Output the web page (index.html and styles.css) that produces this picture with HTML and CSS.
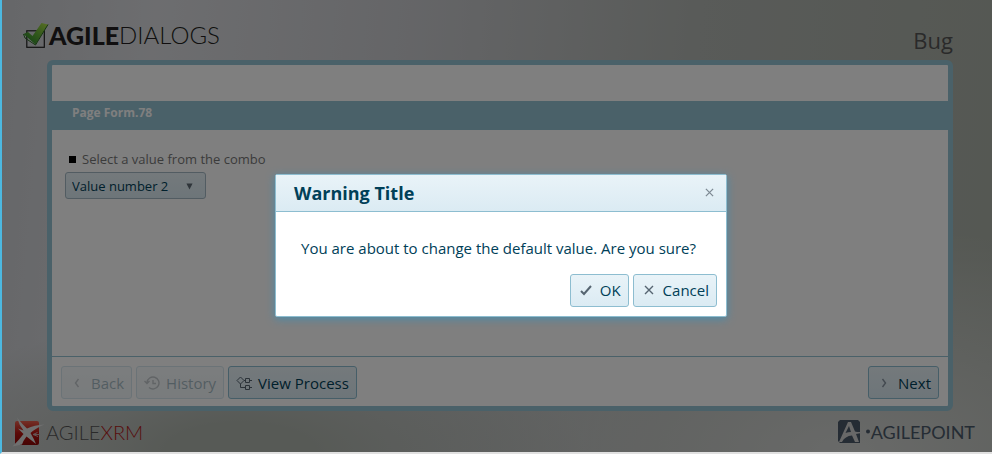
FILE: index.html
```html
<!DOCTYPE html>
<html lang="en">
<head>
<meta charset="utf-8">
<title>AgileDialogs</title>
<link rel="stylesheet" href="styles.css">
</head>
<body>
<div class="window">
  <div class="page">
    <header class="top">
      <div class="brand">
        <svg class="brand-mark" viewBox="0 0 26 27" aria-hidden="true">
          <defs><linearGradient id="tick" x1="0" y1="1" x2="1" y2="0"><stop offset="0" stop-color="#1f7a2c"/><stop offset="0.5" stop-color="#5fae35"/><stop offset="1" stop-color="#b4e04a"/></linearGradient></defs>
          <rect x="3.800" y="8.800" width="17.500" height="16.500" fill="none" stroke="#222" stroke-width="1.200"/>
          <path d="M0.500 12L5 10L9.500 14L18.500 1L25 2.500L12.500 22.500Z" fill="url(#tick)"/>
          <path d="M0.500 12L2 16L12.500 23L25 2.500" fill="none" stroke="#2c6a22" stroke-width="1"/>
        </svg>
        <span class="brand-bold">AGILE</span><span class="brand-thin">DIALOGS</span>
      </div>
      <h1 class="app-title">Bug</h1>
    </header>
    <main class="panel">
      <div class="spacer"></div>
      <h2 class="band">Page Form.78</h2>
      <div class="form">
        <label class="field-label" for="combo">Select a value from the combo</label>
        <div class="combo">
          <select id="combo"><option>Value number 2</option></select>
          <svg class="combo-arrow" viewBox="0 0 8 8" aria-hidden="true"><path d="M0.500 0.500H7.500L4 7.500Z" fill="#5f6b75"/></svg>
        </div>
      </div>
      <div class="actions">
        <button class="btn" type="button" disabled><svg viewBox="0 0 16 16" aria-hidden="true"><path d="M9.500 4L6.500 8L9.500 12"/></svg>Back</button>
        <button class="btn" type="button" disabled><svg viewBox="0 0 16 16" aria-hidden="true"><path d="M3 7.500A6 6 0 1 1 5 12.500M0.500 6L3 8.500L5.500 6M9 5V8.500H12"/></svg>History</button>
        <button class="btn" type="button"><svg viewBox="0 0 16 16" aria-hidden="true"><path class="fine" d="M4.500 2L8 5.500L4.500 9L1 5.500ZM8 5.500H9.500M9.500 3.500H13.500V7.500H9.500ZM13.500 5.500H16M4.500 9V12.500H9.500M9.500 10.500H13.500V14.500H9.500ZM13.500 12.500H16"/></svg>View Process</button>
        <button class="btn next" type="button"><svg viewBox="0 0 16 16" aria-hidden="true"><path class="soft" d="M6.500 4L9.500 8L6.500 12"/></svg>Next</button>
      </div>
    </main>
    <footer class="bottom">
      <div class="xrm">
        <svg class="xrm-mark" viewBox="0 0 34 30" aria-hidden="true">
          <defs><linearGradient id="red" x1="0" y1="0" x2="0" y2="1"><stop offset="0" stop-color="#e8604e"/><stop offset="0.500" stop-color="#b81410"/><stop offset="1" stop-color="#8e0808"/></linearGradient></defs>
          <rect x="3" y="4" width="24" height="24" rx="2" fill="url(#red)"/>
          <path d="M5 0.500Q10 7 15 11.500Q22 8 32.500 7.500Q24 11 18.500 16Q22 22 24 27Q19 23 14.500 19.500Q11 24 10 27.500L0.500 29.500Q7 23 11.500 17L6 11.500L11.500 13.500Q7 8 5 0.500Z" fill="#dedede"/>
          <path d="M25.500 15.500L21 17.500L26 19.500M21 17.500L28 17.500" fill="none" stroke="#c9a9a9" stroke-width="1"/>
        </svg>
        <span class="xrm-text">AGILE<span class="xrm-red">XRM</span></span>
      </div>
      <div class="point">
        <svg class="point-mark" viewBox="0 0 34 25" aria-hidden="true">
          <path d="M3 1H21L23 3V24H3L1 22V3Z" fill="#4a5968"/>
          <path d="M2 23L11 3H14L18 12.500Q22 13.500 27 12.500Q23 14.500 19 15L22 23H18L15 16.500Q8 17 5 23ZM8.500 14Q11 13 14 13L12 7Z" fill="#d0d0d0" fill-rule="evenodd"/>
          <circle cx="31" cy="12.500" r="2" fill="#4a5968"/>
        </svg>
        <span class="point-text">AGILEPOINT</span>
      </div>
    </footer>
  </div>
  <div class="overlay">
    <div class="dialog" role="dialog" aria-labelledby="dlg-title">
      <div class="dialog-head">
        <h2 id="dlg-title">Warning Title</h2>
        <button class="close" type="button" aria-label="Close"><svg viewBox="0 0 10 10" aria-hidden="true"><path d="M1 1L9 9M9 1L1 9"/></svg></button>
      </div>
      <p class="message">You are about to change the default value. Are you sure?</p>
      <div class="dialog-actions">
        <button class="btn" type="button"><svg viewBox="0 0 16 16" aria-hidden="true"><path class="bold" d="M3 9L6 12L13 4"/></svg>OK</button>
        <button class="btn" type="button"><svg viewBox="0 0 16 16" aria-hidden="true"><path d="M4 4L12 12M12 4L4 12"/></svg>Cancel</button>
      </div>
    </div>
  </div>
</div>
</body>
</html>
```
FILE: styles.css
```css
* { box-sizing: border-box; }
body {
  margin: 0;
  font-family: "Open Sans", "Noto Sans", sans-serif;
  font-size: 15px;
  color: #004058;
}
h1, h2, p { margin: 0; }
.window {
  position: relative;
  height: 100vh;
  display: flex;
  border-left: 2px solid #4cb8e0;
  border-bottom: 2px solid #e0e0e0;
}
.page {
  flex: 1;
  display: flex;
  flex-direction: column;
  background:
    radial-gradient(ellipse 35% 30% at 24% 100%, #aeb4ac 20%, transparent),
    radial-gradient(ellipse 45% 50% at 85% 100%, #d2d4d2, transparent),
    linear-gradient(95deg, #ccced2 0%, #dadbdf 15%, #cacbcf 40%, #b2b6b2 68%, #aab0a6 100%);
}
.top {
  height: 60px;
  display: flex;
  justify-content: space-between;
  align-items: center;
  padding: 16px 39px 0 21px;
}
.brand { display: flex; align-items: center; line-height: 28px; margin-top: -6px; }
.brand-mark { width: 26px; height: 27px; }
.brand-bold { font: 900 25px/28px Lato, sans-serif; color: #221f20; }
.brand-thin { font: 300 24px/28px Lato, sans-serif; color: #221f20; }
.app-title { font-size: 22px; font-weight: 400; color: #555; line-height: 30px; margin-top: 4px; }
.panel {
  flex: 1;
  display: flex;
  flex-direction: column;
  margin: 0 39px 0 45px;
  border: 5px solid #94c2d2;
  border-radius: 6px;
  background: #fff;
}
.spacer { height: 36px; }
.band {
  height: 29px;
  padding-left: 20px;
  background: #94c2d2;
  color: #fff;
  font-size: 12px;
  line-height: 24px;
}
.form { flex: 1; padding: 20px 13px; }
.field-label {
  display: flex;
  align-items: center;
  gap: 6px;
  padding-left: 4px;
  font-size: 13px;
  line-height: 18px;
  color: #777;
}
.field-label::before { content: ""; width: 7px; height: 7px; background: #000; }
.combo { position: relative; width: 141px; margin-top: 4px; }
.combo select {
  appearance: none;
  display: block;
  width: 100%;
  height: 27px;
  padding: 0 6px;
  border: 1px solid #a4b8c4;
  border-radius: 3px;
  background: linear-gradient(#e9f3f8, #dbebf3);
  color: #004058;
  font: 13px "Open Sans", sans-serif;
}
.combo-arrow { position: absolute; right: 13px; top: 11px; width: 7px; height: 7px; }
.actions {
  display: flex;
  gap: 4px;
  padding: 9px;
  height: 50px;
  border-top: 1px solid #94c2d2;
}
.btn {
  display: flex;
  align-items: center;
  gap: 6px;
  height: 33px;
  padding: 0 7px;
  border: 1px solid #8dbdd0;
  border-radius: 3px;
  background: linear-gradient(#e9f3f8, #dbebf3);
  color: #004058;
  font: 15px "Open Sans", sans-serif;
}
.btn:disabled { opacity: 0.35; }
.btn svg { width: 16px; height: 16px; }
.btn path, .close path { fill: none; stroke: #566571; stroke-width: 1.4; }
.btn .bold { stroke-width: 2; }
.btn .fine { stroke-width: 1; }
.btn .soft { stroke: #8793a0; }
.close path { stroke: #7d8993; }
.next { margin-left: auto; }
.bottom {
  height: 41px;
  display: flex;
  justify-content: space-between;
  align-items: center;
  padding: 0 17px 0 10px;
}
.xrm, .point { display: flex; align-items: center; }
.xrm-mark { width: 34px; height: 30px; }
.xrm-text { font: 300 20px/24px Lato, sans-serif; color: #555; }
.xrm-red { color: #b01818; }
.point-mark { width: 34px; height: 25px; }
.point-text { font: 400 18px/24px Lato, sans-serif; color: #4a5968; }
.overlay {
  position: absolute;
  inset: 0;
  display: flex;
  justify-content: center;
  align-items: center;
  padding: 40px 0 2px 8px;
  background: rgba(0, 0, 0, 0.5);
}
.dialog {
  width: 452px;
  border: 1px solid #8dbdd0;
  border-radius: 2px;
  background: #fff;
  box-shadow: 0 2px 8px #4a8cab;
}
.dialog-head {
  display: flex;
  justify-content: space-between;
  align-items: center;
  height: 37px;
  padding: 0 12px 0 18px;
  border-bottom: 1px solid #8dbdd0;
  background: linear-gradient(#e9f3f8, #dbebf3);
}
.dialog-head h2 { font-size: 18px; line-height: 24px; }
.close { display: flex; padding: 0; border: 0; background: none; }
.close svg { width: 9px; height: 9px; }
.message { padding: 24px 25px 0; line-height: 24px; }
.dialog-actions {
  display: flex;
  justify-content: flex-end;
  gap: 4px;
  padding: 14px 9px 9px;
}
```
